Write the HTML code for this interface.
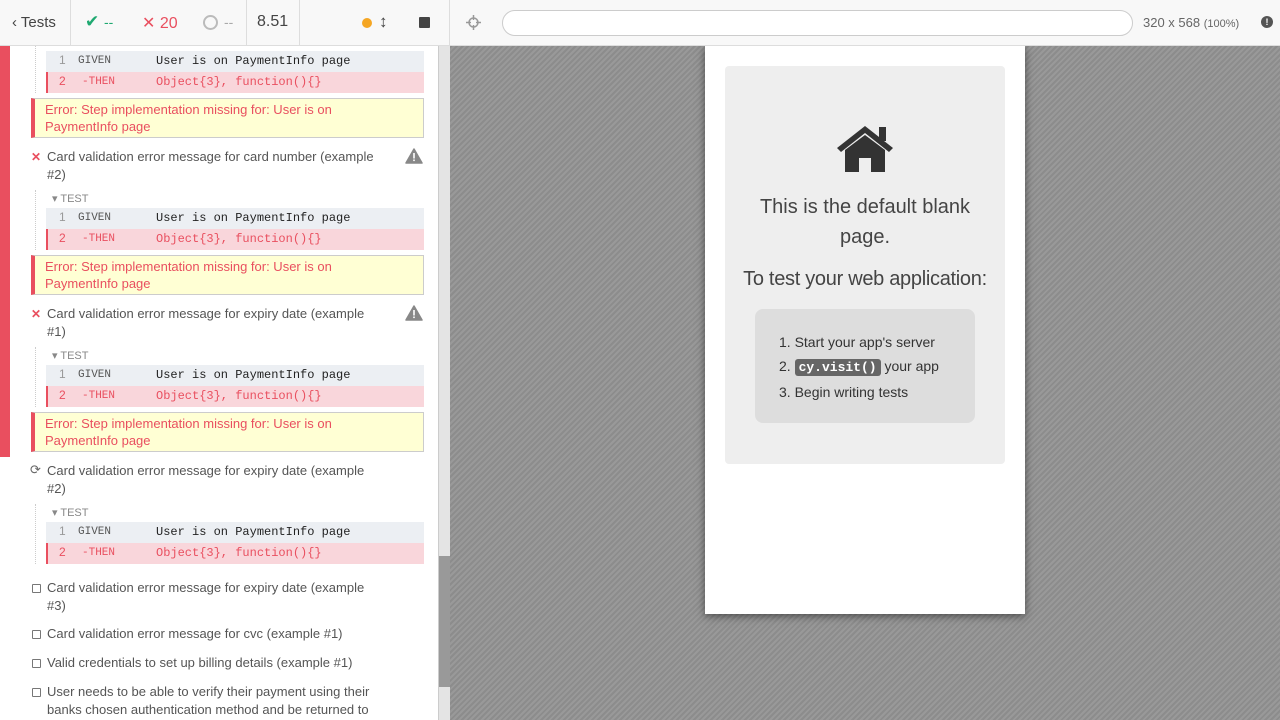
<!DOCTYPE html>
<html><head><meta charset="utf-8"><style>
*{box-sizing:border-box;margin:0;padding:0}
body{width:1280px;height:720px;overflow:hidden;font-family:"Liberation Sans",sans-serif;position:relative;background:#fff}
.a{position:absolute}
.hdr{left:0;top:0;width:1280px;height:46px;background:#f8f8f8;border-bottom:1px solid #ddd}
.sep{top:0;width:1px;height:46px;background:#ddd}
.mono{font-family:"Liberation Mono",monospace;font-size:12px}
.r1{left:46px;width:378px;height:21px;background:#eceff3}
.r2{left:46px;width:378px;height:21px;background:#f9d6db;border-left:2px solid #e94f5f}
.num{font-size:12px;color:#999;top:3px}
.err{left:31px;width:393px;height:40px;background:#ffffd4;border:1px solid #ccc;border-left:4px solid #e94f5f;color:#e94f5f;font-size:13px;line-height:17px;padding:2px 60px 2px 10px}
.t{left:47px;width:330px;font-size:13px;line-height:18px;color:#555}
.test{left:52px;font-size:11px;color:#888}
.dot{left:35px;width:0;border-left:1px dotted #ccc}
.cb{left:32px;width:9px;height:9px;border:1px solid #777;border-radius:1px}
.x{color:#e94f5f;font-size:12px;left:31px;font-weight:bold}
</style></head><body>
<div class="a" style="left:450px;top:46px;width:830px;height:674px;background:repeating-linear-gradient(135deg,#8c8c8c 0 2px,#999 2px 4px)"></div>
<div class="a" style="left:705px;top:46px;width:320px;height:568px;background:#fff;box-shadow:0 2px 8px rgba(0,0,0,.5)"></div>
<div class="a" style="left:725px;top:66px;width:280px;height:398px;background:#eee;border-radius:4px"></div>
<svg class="a" style="left:835px;top:124px" width="60" height="50" viewBox="0 0 60 50"><path d="M2 24 L30 2 L58 24 L54 28 L30 9 L6 28Z" fill="#333"/><rect x="44" y="3" width="7" height="14" fill="#333"/><path d="M10 26 L30 11 L50 26 L50 48 L36 48 L36 34 L24 34 L24 48 L10 48Z" fill="#333"/></svg>
<div class="a" style="left:725px;top:192px;width:280px;text-align:center;font-size:20px;line-height:30px;color:#444">This is the default blank<br>page.</div>
<div class="a" style="left:725px;top:265px;width:280px;text-align:center;font-size:20px;line-height:28px;color:#444;letter-spacing:-0.3px">To test your web application:</div>
<div class="a" style="left:755px;top:309px;width:220px;height:114px;background:#ddd;border-radius:8px"></div>
<div class="a" style="left:779px;top:330px;font-size:14px;line-height:24px;color:#333">1. Start your app's server<br>2. <span class="mono" style="background:#666;color:#fff;padding:1px 4px;border-radius:3px;font-weight:bold;font-size:13px">cy.visit()</span> your app<br>3. Begin writing tests</div>

<div class="a" style="left:0;top:46px;width:10px;height:411px;background:#e94f5f"></div>
<div class="a" style="left:438px;top:46px;width:12px;height:674px;background:#e4e4e4;border-left:1px solid #ccc"></div>
<div class="a" style="left:439px;top:556px;width:11px;height:131px;background:#999"></div>

<div class="a dot" style="top:46px;height:47px"></div>
<div class="a dot" style="top:190px;height:60px"></div>
<div class="a dot" style="top:347px;height:60px"></div>
<div class="a dot" style="top:504px;height:60px"></div>

<div class="a r1" style="top:51px"></div><div class="a r2" style="top:72px"></div>
<div class="a r1" style="top:208px"></div><div class="a r2" style="top:229px"></div>
<div class="a r1" style="top:365px"></div><div class="a r2" style="top:386px"></div>
<div class="a r1" style="top:522px"></div><div class="a r2" style="top:543px"></div>

<div id="rows"></div>
<script>
var h='';[51,208,365,522].forEach(function(y){
h+='<div class="a num" style="left:59px;top:'+(y+2)+'px">1</div><div class="a mono" style="left:78px;top:'+(y+4)+'px;font-size:11px;color:#555">GIVEN</div><div class="a mono" style="left:156px;top:'+(y+3)+'px;color:#222">User is on PaymentInfo page</div>';
var z=y+21;
h+='<div class="a" style="left:59px;top:'+(z+2)+'px;font-size:12px;color:#e94f5f">2</div><div class="a mono" style="left:82px;top:'+(z+4)+'px;font-size:11px;color:#e94f5f">-THEN</div><div class="a mono" style="left:156px;top:'+(z+3)+'px;color:#e94f5f">Object{3}, function(){}</div>';
});document.getElementById('rows').innerHTML=h;
</script>

<div class="a err" style="top:98px">Error: Step implementation missing for: User is on PaymentInfo page</div>
<div class="a err" style="top:255px">Error: Step implementation missing for: User is on PaymentInfo page</div>
<div class="a err" style="top:412px">Error: Step implementation missing for: User is on PaymentInfo page</div>

<div class="a x" style="top:150px">✕</div>
<div class="a t" style="top:148px">Card validation error message for card number (example #2)</div>
<svg class="a" style="left:405px;top:148px" width="18" height="16" viewBox="0 0 18 16"><path d="M9 1 L17 15 L1 15Z" fill="#888" stroke="#888" stroke-linejoin="round" stroke-width="1.5"/><rect x="8.2" y="5" width="1.6" height="5.5" fill="#fff"/><rect x="8.2" y="11.5" width="1.6" height="1.6" fill="#fff"/></svg>
<div class="a test" style="top:192px">▾ TEST</div>

<div class="a x" style="top:307px">✕</div>
<div class="a t" style="top:305px;width:320px">Card validation error message for expiry date (example #1)</div>
<svg class="a" style="left:405px;top:305px" width="18" height="16" viewBox="0 0 18 16"><path d="M9 1 L17 15 L1 15Z" fill="#888" stroke="#888" stroke-linejoin="round" stroke-width="1.5"/><rect x="8.2" y="5" width="1.6" height="5.5" fill="#fff"/><rect x="8.2" y="11.5" width="1.6" height="1.6" fill="#fff"/></svg>
<div class="a test" style="top:349px">▾ TEST</div>

<div class="a" style="left:30px;top:462px;font-size:13px;color:#666">⟳</div>
<div class="a t" style="top:462px;width:320px">Card validation error message for expiry date (example #2)</div>
<div class="a test" style="top:506px">▾ TEST</div>

<div class="a cb" style="top:584px"></div>
<div class="a t" style="top:579px;width:320px">Card validation error message for expiry date (example #3)</div>
<div class="a cb" style="top:630px"></div>
<div class="a t" style="top:625px">Card validation error message for cvc (example #1)</div>
<div class="a cb" style="top:659px"></div>
<div class="a t" style="top:654px">Valid credentials to set up billing details (example #1)</div>
<div class="a cb" style="top:688px"></div>
<div class="a t" style="top:683px">User needs to be able to verify their payment using their banks chosen authentication method and be returned to</div>

<div class="a hdr"></div>
<div class="a sep" style="left:70px"></div>
<div class="a sep" style="left:246px"></div>
<div class="a sep" style="left:299px"></div>
<div class="a sep" style="left:449px"></div>
<div class="a" style="left:12px;top:14px;font-size:15px;color:#444">‹ Tests</div>
<div class="a" style="left:85px;top:12px;font-size:17px;color:#1fa971">✔ <span style="font-size:14px">--</span></div>
<div class="a" style="left:142px;top:13px;font-size:16px;color:#e94f5f">✕ 20</div>
<div class="a" style="left:203px;top:15px;width:15px;height:15px;border:2px solid #bbb;border-radius:50%"></div>
<div class="a" style="left:224px;top:14px;font-size:14px;color:#aaa">--</div>
<div class="a" style="left:257px;top:13px;font-size:16px;color:#444">8.51</div>
<div class="a" style="left:362px;top:18px;width:10px;height:10px;border-radius:50%;background:#f5a623"></div>
<div class="a" style="left:379px;top:12px;font-size:17px;color:#444;font-weight:bold">↕</div>
<div class="a" style="left:419px;top:17px;width:11px;height:11px;background:#444;border-radius:1px"></div>
<svg class="a" style="left:466px;top:15px" width="15" height="15" viewBox="0 0 15 15"><circle cx="7.5" cy="7.5" r="4.5" fill="none" stroke="#999" stroke-width="1.5"/><path d="M7.5 0V5M7.5 10V15M0 7.5H5M10 7.5H15" stroke="#999" stroke-width="1.5"/></svg>
<div class="a" style="left:502px;top:10px;width:631px;height:26px;background:#fff;border:1px solid #ccc;border-radius:13px"></div>
<div class="a" style="left:1143px;top:15px;font-size:13px;color:#666">320 x 568 <span style="font-size:11px">(100%)</span></div>
<div class="a" style="left:1261px;top:16px;width:12px;height:12px;border-radius:50%;background:#555;color:#fff;font-size:9px;text-align:center;line-height:12px;font-weight:bold">!</div>
</body></html>
